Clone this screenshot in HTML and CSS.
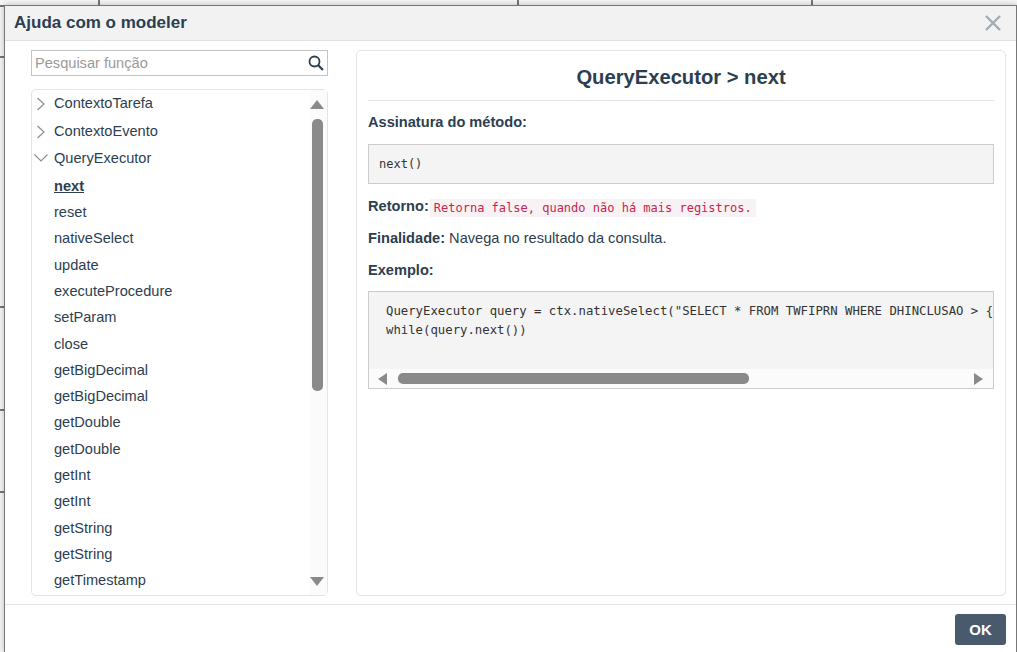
FILE: index.html
```html
<!DOCTYPE html>
<html lang="pt-BR">
<head>
    <meta charset="UTF-8">
    <meta name="viewport" content="width=device-width, initial-scale=1.0">
    <title>Ajuda com o modeler</title>
    <link rel="stylesheet" href="styles.css">
</head>
<body>
    <div class="backdrop">
        <i class="vline vline-a"></i>
        <i class="vline vline-b"></i>
        <i class="vline vline-c"></i>
        <i class="hline hline-a"></i>
        <i class="hline hline-b"></i>
        <i class="hline hline-c"></i>
        <i class="hline hline-d"></i>
        <i class="hline hline-e"></i>
    </div>

    <div class="modal">
        <div class="modal-header">
            <h1>Ajuda com o modeler</h1>
            <svg class="close-icon" width="16" height="16" viewBox="0 0 16 16">
                <path d="M1 1L15 15M15 1L1 15" stroke="#a3abb4" stroke-width="2.4" fill="none"/>
            </svg>
        </div>

        <div class="modal-body">
            <div class="sidebar">
                <div class="search">
                    <span class="search-text">Pesquisar função</span>
                    <svg width="16" height="16" viewBox="0 0 16 16">
                        <circle cx="6.5" cy="6.5" r="5" stroke="#2c3e50" stroke-width="1.8" fill="none"/>
                        <path d="M10.2 10.2L15 15" stroke="#2c3e50" stroke-width="2.2" fill="none"/>
                    </svg>
                </div>

                <div class="tree">
                    <ul class="tree-list">
                        <li class="parent">
                            <svg width="12" height="14" viewBox="0 0 12 14"><path d="M2.5 1L9 7L2.5 13" stroke="#8a8f96" stroke-width="1.2" fill="none"/></svg>
                            ContextoTarefa
                        </li>
                        <li class="parent">
                            <svg width="12" height="14" viewBox="0 0 12 14"><path d="M2.5 1L9 7L2.5 13" stroke="#8a8f96" stroke-width="1.2" fill="none"/></svg>
                            ContextoEvento
                        </li>
                        <li class="parent">
                            <svg class="open" width="14" height="14" viewBox="0 0 14 14"><path d="M0.5 3.5L7 10L13.5 3.5" stroke="#8a8f96" stroke-width="1.2" fill="none"/></svg>
                            QueryExecutor
                        </li>
                        <li class="child active">next</li>
                        <li class="child">reset</li>
                        <li class="child">nativeSelect</li>
                        <li class="child">update</li>
                        <li class="child">executeProcedure</li>
                        <li class="child">setParam</li>
                        <li class="child">close</li>
                        <li class="child">getBigDecimal</li>
                        <li class="child">getBigDecimal</li>
                        <li class="child">getDouble</li>
                        <li class="child">getDouble</li>
                        <li class="child">getInt</li>
                        <li class="child">getInt</li>
                        <li class="child">getString</li>
                        <li class="child">getString</li>
                        <li class="child">getTimestamp</li>
                    </ul>
                    <div class="vscroll">
                        <span class="arrow-up"></span>
                        <span class="vthumb"></span>
                        <span class="vspace"></span>
                        <span class="arrow-down"></span>
                    </div>
                </div>
            </div>

            <div class="detail">
                <h2>QueryExecutor &gt; next</h2>
                <p class="label">Assinatura do método:</p>
                <pre class="signature">next()</pre>
                <p class="line line-return"><b>Retorno:</b><code>Retorna false, quando não há mais registros.</code></p>
                <p class="line"><b>Finalidade:</b> Navega no resultado da consulta.</p>
                <p class="label">Exemplo:</p>
                <div class="example">
                    <pre>QueryExecutor query = ctx.nativeSelect("SELECT * FROM TWFIPRN WHERE DHINCLUSAO > {
while(query.next())</pre>
                    <div class="hscroll">
                        <span class="arrow-left"></span>
                        <span class="hthumb"></span>
                        <span class="hspace"></span>
                        <span class="arrow-right"></span>
                    </div>
                </div>
            </div>
        </div>

        <div class="modal-footer">
            <button class="ok">OK</button>
        </div>
    </div>
</body>
</html>
```

FILE: styles.css
```css
html, body {
    height: 100%;
}

body {
    margin: 0;
    padding: 5px 0 0 4px;
    box-sizing: border-box;
    background-color: #f6f6f6;
    font-family: "Liberation Sans", Arial, sans-serif;
    font-size: 14.6px;
    color: #2c3e50;
    overflow: hidden;
}

.backdrop i {
    position: absolute;
    background-color: #777;
}

.vline {
    top: 0;
    width: 2px;
    height: 6px;
}

.vline-a { left: 98px; }
.vline-b { left: 517px; }
.vline-c { left: 811px; }

.hline {
    height: 2px;
    width: 5px;
    left: 0;
}

.hline-a { top: 56px; }
.hline-b { top: 306px; }
.hline-c { top: 409px; }
.hline-d { top: 491px; }

.modal {
    position: relative;
    height: 100%;
    box-sizing: border-box;
    display: flex;
    flex-direction: column;
    background-color: white;
    border: 1px solid #777;
    border-bottom: none;
    box-shadow: 0 0 6px rgba(0, 0, 0, 0.25);
}

.modal-header {
    height: 35px;
    flex: none;
    box-sizing: border-box;
    display: flex;
    align-items: center;
    justify-content: space-between;
    padding: 0 15px 0 9px;
    background-color: #f2f2f2;
    border-bottom: 1px solid #e2e2e2;
}

.modal-header h1 {
    margin: 0;
    font-size: 17px;
    font-weight: bold;
}

.modal-body {
    flex: 1;
    min-height: 0;
    display: flex;
    gap: 28px;
    padding: 9px 10px 8px 26px;
    border-bottom: 1px solid #e2e2e2;
}

.sidebar {
    width: 297px;
    flex: none;
    display: flex;
    flex-direction: column;
    gap: 13px;
}

.search {
    height: 26px;
    flex: none;
    box-sizing: border-box;
    display: flex;
    align-items: center;
    justify-content: space-between;
    padding: 0 3px 0 3px;
    border: 1px solid #c4c4c4;
}

.search-text {
    color: #9a9a9a;
}

.tree {
    flex: 1;
    min-height: 0;
    display: flex;
    border: 1px solid #e4e4e4;
    border-radius: 5px;
}

.tree-list {
    flex: 1;
    margin: 0;
    padding: 0.3px 0 0;
    list-style: none;
    overflow: hidden;
}

.tree-list li {
    position: relative;
    box-sizing: border-box;
    padding-left: 22px;
}

.tree-list .parent {
    height: 27.5px;
    line-height: 27px;
}

.tree-list .child {
    height: 26.3px;
    line-height: 26px;
}

.tree-list svg {
    position: absolute;
    left: 3px;
    top: 7px;
}

.tree-list svg.open {
    left: 2px;
    top: 6px;
}

.active {
    font-weight: bold;
    text-decoration: underline;
}

.vscroll {
    width: 17px;
    flex: none;
    display: flex;
    flex-direction: column;
    align-items: center;
    background-color: #fbfbfb;
    padding: 10px 4px 9px 1px;
    box-sizing: border-box;
}

.arrow-up, .arrow-down {
    width: 0;
    height: 0;
    border-left: 7px solid transparent;
    border-right: 7px solid transparent;
    flex: none;
}

.arrow-up { border-bottom: 9px solid #8a8a8a; }
.arrow-down { border-top: 9px solid #8a8a8a; }

.vthumb {
    width: 11px;
    height: 272px;
    margin-top: 10px;
    flex: none;
    background-color: #8a8a8a;
    border-radius: 5px;
}

.vspace, .hspace {
    flex: 1;
}

.detail {
    flex: 1;
    min-width: 0;
    padding: 0 11px;
    border: 1px solid #e4e4e4;
    border-radius: 5px;
}

.detail h2 {
    margin: 0 0 11px;
    padding: 14px 0 11px;
    font-size: 20.2px;
    line-height: 24px;
    text-align: center;
    border-bottom: 1px solid #e2e2e2;
}

.detail p {
    margin: 0;
    line-height: 20px;
}

.label {
    font-weight: bold;
}

.signature {
    margin: 12px 0 12px;
    padding: 10px;
    height: 40px;
    box-sizing: border-box;
    background-color: #f4f4f4;
    border: 1px solid #ccc;
    font-family: "DejaVu Sans Mono", monospace;
    font-size: 12px;
    line-height: 18px;
    color: #333;
}

.detail .line {
    margin-bottom: 12px;
}

.detail .line-return {
    margin-bottom: 11px;
}

code {
    position: relative;
    top: 1px;
    margin-left: 1px;
    font-family: "DejaVu Sans Mono", monospace;
    font-size: 12px;
    color: #c7254e;
    background-color: #f9f2f4;
    padding: 2px 4px;
}

.example {
    margin-top: 11px;
    border: 1px solid #ccc;
    background-color: #f4f4f4;
    overflow: hidden;
}

.example pre {
    margin: 0;
    height: 77px;
    box-sizing: border-box;
    padding: 10px 17px;
    overflow: hidden;
    font-family: "DejaVu Sans Mono", monospace;
    font-size: 12.3px;
    line-height: 19px;
    color: #333;
}

.hscroll {
    height: 19px;
    display: flex;
    align-items: center;
    background-color: #fbfbfb;
    padding: 0 10px 0 9px;
}

.arrow-left, .arrow-right {
    width: 0;
    height: 0;
    border-top: 6px solid transparent;
    border-bottom: 6px solid transparent;
    flex: none;
}

.arrow-left { border-right: 9px solid #8a8a8a; }
.arrow-right { border-left: 9px solid #8a8a8a; }

.hthumb {
    width: 351px;
    height: 11px;
    margin-left: 11px;
    flex: none;
    background-color: #8a8a8a;
    border-radius: 5px;
}

.modal-footer {
    height: 47px;
    flex: none;
    box-sizing: border-box;
    display: flex;
    justify-content: flex-end;
    align-items: flex-start;
    padding: 9px 10px 0 0;
}

.ok {
    width: 51px;
    height: 31px;
    padding: 0;
    background-color: #4a5a6d;
    color: white;
    border: none;
    border-radius: 3px;
    font-family: "Liberation Sans", Arial, sans-serif;
    font-size: 15px;
    font-weight: bold;
}
```
